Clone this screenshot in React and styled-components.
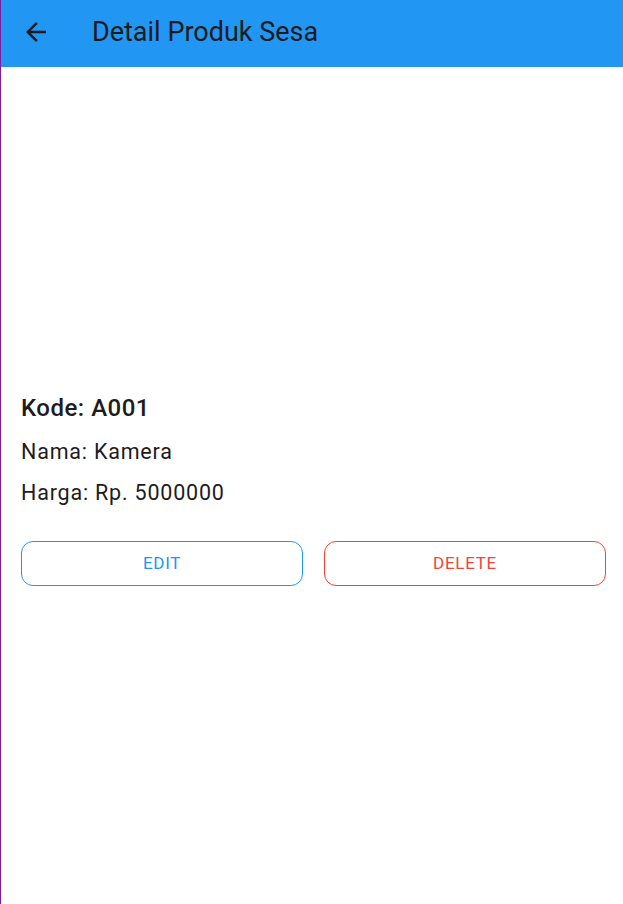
import React from 'react';
import styled, { createGlobalStyle } from 'styled-components';

const GlobalStyle = createGlobalStyle`
  html, body {
    margin: 0;
    padding: 0;
    background: #fff;
  }
  body {
    font-family: Roboto, 'Noto Sans', sans-serif;
  }
`;

const Screen = styled.div`
  height: 100vh;
  display: flex;
  flex-direction: column;
  border-left: 1px solid #7b1fa2;
  box-sizing: border-box;
`;

const AppBar = styled.header`
  height: 67px;
  flex-shrink: 0;
  background: #2196f3;
  display: flex;
  align-items: center;
  padding: 0 0 3px 20px;
  box-sizing: border-box;
  gap: 41px;
`;

const BackButton = styled.button`
  border: none;
  background: none;
  padding: 0;
  width: 30px;
  height: 30px;
  display: flex;
  align-items: center;
  justify-content: center;
  color: #1d1b20;
  cursor: pointer;
`;

const Title = styled.h1`
  margin: 0;
  font-size: 27px;
  font-weight: 400;
  color: #1d1b20;
`;

const Body = styled.main`
  flex: 1;
  display: flex;
  flex-direction: column;
  justify-content: center;
  padding: 6px 17px 0 20px;
`;

const Line = styled.p`
  margin: 0;
  color: #1d1b20;
  font-size: ${(p) => (p.$head ? '24px' : '21.5px')};
  font-weight: ${(p) => (p.$head ? 500 : 400)};
  letter-spacing: ${(p) => (p.$head ? '0.5px' : '0.8px')};
  line-height: ${(p) => (p.$head ? '32px' : '28px')};
  margin-bottom: ${(p) => (p.$head ? '14px' : '13px')};
`;

const Actions = styled.div`
  display: grid;
  grid-template-columns: 1fr 1fr;
  gap: 21px;
  margin-top: 21px;
`;

const Outline = styled.button`
  height: 45px;
  border-radius: 12px;
  background: #fff;
  border: 1px solid ${(p) => p.$color};
  color: ${(p) => p.$color};
  font-family: Roboto, sans-serif;
  font-size: 17px;
  letter-spacing: 0.7px;
  padding-top: 1px;
  cursor: pointer;
`;

const ArrowBack = () => (
  <svg width="30" height="30" viewBox="0 0 24 24" fill="currentColor">
    <path d="M20 11H7.83l5.59-5.59L12 4l-8 8 8 8 1.41-1.41L7.83 13H20v-2z" />
  </svg>
);

export default function App() {
  return (
    <>
      <GlobalStyle />
      <Screen>
        <AppBar>
          <BackButton aria-label="Kembali">
            <ArrowBack />
          </BackButton>
          <Title>Detail Produk Sesa</Title>
        </AppBar>
        <Body>
          <Line $head>Kode: A001</Line>
          <Line>Nama: Kamera</Line>
          <Line>Harga: Rp. 5000000</Line>
          <Actions>
            <Outline $color="#2196f3">EDIT</Outline>
            <Outline $color="#f44336">DELETE</Outline>
          </Actions>
        </Body>
      </Screen>
    </>
  );
}
